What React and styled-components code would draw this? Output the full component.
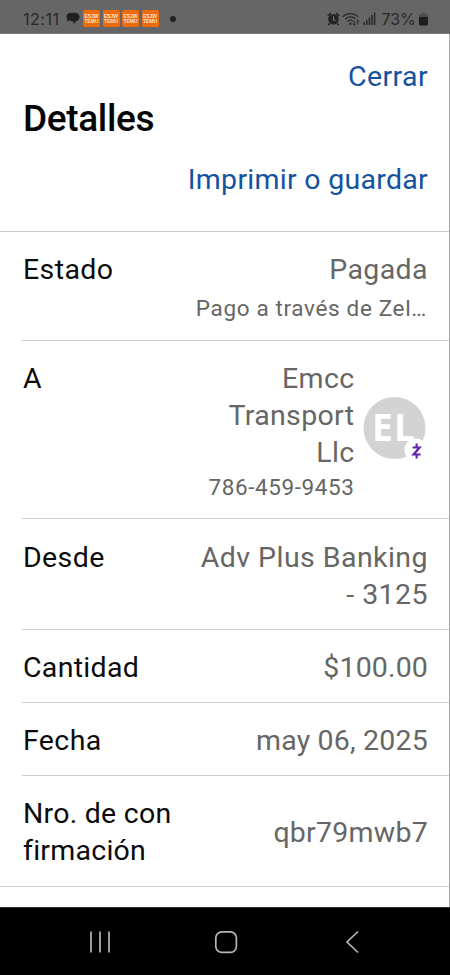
import React from "react";
import styled, { createGlobalStyle } from "styled-components";

const GlobalStyle = createGlobalStyle`
  * { box-sizing: border-box; }
  body { margin: 0; background: #fff; font-family: Roboto, sans-serif; }
`;

const Screen = styled.div`
  width: 450px;
  height: 975px;
  display: flex;
  flex-direction: column;
  overflow: hidden;
`;

const StatusBar = styled.header`
  height: 34px;
  flex: none;
  display: flex;
  align-items: center;
  justify-content: space-between;
  padding: 4px 22px 0 23px;
  background: #666;
  color: #292929;
  border-bottom: 1px solid #777;
`;

const StatusGroup = styled.div`
  display: flex;
  align-items: center;
  gap: ${(p) => p.$gap}px;
`;

const StatusText = styled.span`
  font-family: Inter, sans-serif;
  font-size: 16px;
  line-height: 20px;
  width: ${(p) => p.$width}px;
  letter-spacing: ${(p) => p.$spacing}px;
  white-space: nowrap;
`;

const AppTile = styled.span`
  width: 17px;
  height: 17px;
  margin-right: -0.5px;
  border-radius: 2px;
  background: #ee6c10;
  color: #fde3cc;
  display: flex;
  flex-direction: column;
  align-items: center;
  justify-content: center;
  font: 700 5px/4.5px "Liberation Sans", sans-serif;
`;

const Dot = styled.span`
  width: 6px;
  height: 6px;
  margin-left: 8.5px;
  border-radius: 50%;
  background: #222;
`;

const Content = styled.main`
  flex: 1;
  background: #fff;
  border-right: 1px solid #a6a6a6;
`;

const Heading = styled.section`
  height: 198px;
  display: flex;
  flex-direction: column;
  padding: 24px 21px 0 23px;
  border-bottom: 1px solid #cbcbcb;
`;

const Link = styled.a`
  align-self: flex-end;
  color: #1452a0;
  font-size: 28.5px;
  line-height: 38px;
  letter-spacing: ${(p) => p.$spacing}px;
`;

const Title = styled.h1`
  margin: -1px 0 18px;
  color: #050505;
  font-size: 37px;
  font-weight: 500;
  line-height: 48px;
  letter-spacing: -0.35px;
`;

const Row = styled.div`
  height: ${(p) => p.$height}px;
  display: flex;
  justify-content: space-between;
  align-items: ${(p) => (p.$center ? "center" : "flex-start")};
  margin-left: ${(p) => (p.$last ? 0 : 22)}px;
  padding: ${(p) => (p.$center ? 2 : p.$top ?? 19)}px 21px 0 ${(p) => (p.$last ? 23 : 1)}px;
  border-bottom: 1px solid #cecece;
`;

const Label = styled.div`
  color: #0b0b0b;
  font-size: 28.5px;
  line-height: 37px;
  letter-spacing: ${(p) => p.$spacing ?? 0.4}px;
  white-space: nowrap;
`;

const Value = styled.div`
  color: #666;
  text-align: right;
  font-size: 28.5px;
  line-height: 37px;
  letter-spacing: ${(p) => p.$spacing ?? 0.4}px;
  white-space: nowrap;
`;

const Detail = styled.div`
  color: #666;
  font-size: 22.5px;
  line-height: 34px;
  margin-top: ${(p) => p.$top}px;
  margin-right: ${(p) => p.$inset ?? 0}px;
  letter-spacing: ${(p) => p.$spacing}px;
`;

const Payee = styled.div`
  display: flex;
  gap: 8px;
`;

const Avatar = styled.svg`
  width: 65.5px;
  height: 66px;
  margin: 36px 0 0;
`;

const Initials = styled.text`
  fill: #fff;
  font-family: "Open Sans", sans-serif;
  font-size: 37px;
  font-weight: 700;
  letter-spacing: 1.3px;
`;

const NavBar = styled.nav`
  height: 68px;
  flex: none;
  background: #000;
  display: grid;
  grid-template-columns: 26px 26px 26px;
  column-gap: 100px;
  align-items: center;
  justify-content: start;
  padding-left: 86.5px;
  border-top: 1px solid #333;
`;

const NavIcon = styled.svg`
  width: 26px;
  height: 26px;
  fill: none;
  stroke: #b5b5b5;
  stroke-width: 1.7;
`;

const rows = [
  { label: ["Desde"], value: ["Adv Plus Banking", "- 3125"], height: 111, top: 20, valueSpacing: 0.45 },
  { label: ["Cantidad"], value: ["$100.00"], height: 73, labelSpacing: 0.3, valueSpacing: 0.15 },
  { label: ["Fecha"], value: ["may 06, 2025"], height: 73, valueSpacing: 0.2 },
  { label: ["Nro. de con", "firmación"], value: ["qbr79mwb7"], height: 111, labelSpacing: 0.25, valueSpacing: 0.25, center: true, last: true },
];

const Lines = ({ items }) => items.map((t) => <div key={t}>{t}</div>);

const ChatIcon = () => (
  <svg width="14" height="13" viewBox="0 0 14 13" fill="#202020">
    <path d="M5 .8C2 .8.5 2.500.5 4.700c0 1 .4 1.800 1 2.500L1 9.600l2.800-1.100z" />
    <path d="M8 .8c3.500 0 5.600 1.800 5.600 4.300 0 2.100-1.500 3.800-3.800 4.300L8 12.200 7.300 9.600C4.700 9.400 2.700 7.700 2.700 5.200 2.700 2.600 4.900.8 8 .8z" />
  </svg>
);

const AlarmIcon = () => (
  <svg width="13" height="14" viewBox="0 0 13 14">
    <path d="M.8 4 3.800 1.200M12.200 4 9.200 1.200M2.500 11.500 1.300 13M10.500 11.500l1.200 1.500" stroke="#242424" strokeWidth="1.700" />
    <circle cx="6.500" cy="7.300" r="5.300" fill="#242424" />
    <path d="M6.500 4.300v3.300l2 1.200" fill="none" stroke="#777" strokeWidth="1.100" />
  </svg>
);

const WifiIcon = () => (
  <svg width="18" height="14" viewBox="0 0 18 14" fill="none" stroke="#292929">
    <path d="M.8 4.800c4-4.300 11.400-4.300 15.200 0M3.200 7.200c3-3 7.500-3 10.300-.2M5.500 9.600c1.700-1.700 4-1.700 5.500-.3" strokeWidth="1.400" />
    <circle cx="8.300" cy="11.700" r="1.200" fill="#292929" stroke="none" />
    <path d="M12.200 8.800v4.400m-1.500-1.500 1.500 1.500 1.500-1.500M15.800 12.500V8m-1.500 1.500L15.800 8l1.500 1.500" />
  </svg>
);

const SignalIcon = () => (
  <svg width="13" height="13" viewBox="0 0 13 13" stroke="#292929" strokeWidth="1.500">
    <path d="M1.200 13V10M3.800 13V8M6.400 13V5.500M9 13V3M11.600 13V.5" />
  </svg>
);

const BatteryIcon = () => (
  <svg width="9" height="14" viewBox="0 0 9 14">
    <path d="M2.500 1h4v1H8a1 1 0 0 1 1 1v4H0V3a1 1 0 0 1 1-1h1.500z" fill="#4d4d4d" />
    <path d="M0 5h9v7a1.500 1.500 0 0 1-1.500 1.500h-6A1.500 1.500 0 0 1 0 12z" fill="#1d1d1d" />
  </svg>
);

export default function App() {
  return (
    <>
      <GlobalStyle />
      <Screen>
        <StatusBar>
          <StatusGroup $gap={3}>
            <StatusText $width={40} $spacing={0.5}>12:11</StatusText>
            <ChatIcon />
            <StatusGroup $gap={3}>
              {[0, 1, 2, 3].map((i) => (
                <AppTile key={i}><span>ESJW</span><span>TEMU</span></AppTile>
              ))}
            </StatusGroup>
            <Dot />
          </StatusGroup>
          <StatusGroup $gap={2}>
            <AlarmIcon />
            <StatusGroup $gap={3}>
              <WifiIcon />
              <SignalIcon />
            </StatusGroup>
            <StatusGroup $gap={4}>
              <span />
              <StatusText $width={33.5} $spacing={-0.05}>73%</StatusText>
              <BatteryIcon />
            </StatusGroup>
          </StatusGroup>
        </StatusBar>
        <Content>
          <Heading>
            <Link $spacing={0.4}>Cerrar</Link>
            <Title>Detalles</Title>
            <Link $spacing={0.28}>Imprimir o guardar</Link>
          </Heading>
          <Row $height={109}>
            <Label>Estado</Label>
            <Value>
              Pagada
              <Detail $top={3} $inset={1} $spacing={0.65}>Pago a través de Zel…</Detail>
            </Value>
          </Row>
          <Row $height={178}>
            <Label>A</Label>
            <Payee>
              <Value $spacing={0.35}>
                <Lines items={["Emcc", "Transport", "Llc"]} />
                <Detail $top={-1} $spacing={0.6}>786-459-9453</Detail>
              </Value>
              <Avatar viewBox="0 0 65.5 66">
                <circle cx="31.500" cy="32" r="31" fill="#d3d3d3" />
                <Initials x="9" y="45">EL</Initials>
                <circle cx="53" cy="54" r="11.500" fill="#fff" />
                <path d="M49.600 51.500h7l-6 7h7M53.600 47.500v3.500M53.600 59v3.500" fill="none" stroke="#6420ad" strokeWidth="2.200" />
              </Avatar>
            </Payee>
          </Row>
          {rows.map((r) => (
            <Row key={r.label[0]} $height={r.height} $top={r.top} $center={r.center} $last={r.last}>
              <Label $spacing={r.labelSpacing}><Lines items={r.label} /></Label>
              <Value $spacing={r.valueSpacing}><Lines items={r.value} /></Value>
            </Row>
          ))}
        </Content>
        <NavBar>
          <NavIcon viewBox="0 0 26 26"><path d="M4 2.500v21M13 2.500v21M22 2.500v21" /></NavIcon>
          <NavIcon viewBox="0 0 26 26"><rect x="2.800" y="2.800" width="20.600" height="20.600" rx="6" /></NavIcon>
          <NavIcon viewBox="0 0 26 26"><path d="M19 2.500 8 13l11 10.500" /></NavIcon>
        </NavBar>
      </Screen>
    </>
  );
}
